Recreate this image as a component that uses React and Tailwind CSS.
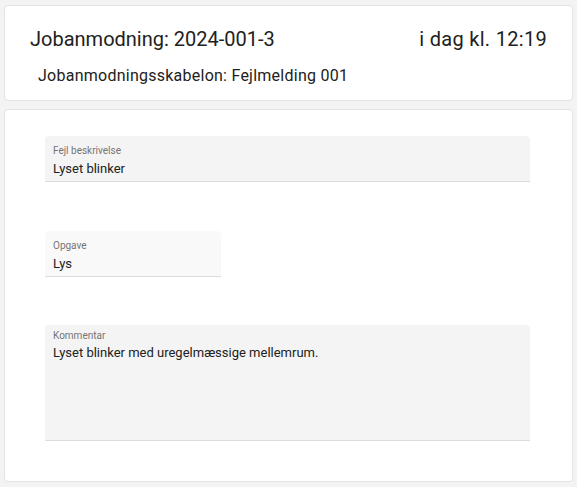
import React from 'react';

function Field({ label, value, className = '', bg = 'bg-[#f4f4f4]', valueGap = 'mt-[3px]' }) {
  return (
    <div className={`${bg} rounded-t-[4px] border-b border-[#dcdcdc] px-2 ${className}`}>
      <div className="text-[10px] leading-[12px] text-[#757575]">{label}</div>
      <div className={`${valueGap} text-[13px] leading-[18px] text-[#212121]`}>{value}</div>
    </div>
  );
}

export default function App() {
  return (
    <div className="min-h-[487px] bg-[#f3f3f3] px-1 pt-[5px] pb-[5px] font-['Roboto',sans-serif]">
      <div className="rounded-[4px] border border-[#e3e3e3] bg-white h-[96px] pl-[25px] pr-[25px] pt-[20px]">
        <div className="flex items-center justify-between text-[20px] leading-[26px] tracking-[0px] text-[#212121]">
          <span>Jobanmodning: 2024-001-3</span>
          <span className="tracking-[0.3px]">i dag kl. 12:19</span>
        </div>
        <div className="mt-[14px] pl-[8px] text-[16px] leading-[20px] tracking-[0.25px] text-[#212121]">
          Jobanmodningsskabelon: Fejlmelding 001
        </div>
      </div>

      <div className="mt-[8px] rounded-[4px] border border-[#e3e3e3] bg-white h-[373px] pl-[40px] pr-[40px] pt-[26px]">
        <div className="flex flex-col">
          <Field label="Fejl beskrivelse" value="Lyset blinker" className="w-[485px] h-[46px] pt-[9px]" />
          <Field
            label="Opgave"
            value="Lys"
            className="mt-[49px] w-[176px] h-[46px] pt-[9px]"
            bg="bg-[#f9f9f9]"
          />
          <Field
            label="Kommentar"
            value="Lyset blinker med uregelmæssige mellemrum."
            className="mt-[48px] w-[485px] h-[116px] pt-[5px]"
            valueGap="mt-[2px]"
          />
        </div>
      </div>
    </div>
  );
}
